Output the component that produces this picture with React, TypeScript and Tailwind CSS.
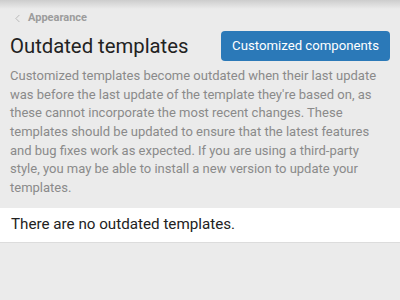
import { ChevronLeft } from "lucide-react";

// Page: outdated templates list (empty state)
export default function App() {
  return (
    <div
      className="relative w-[400px] h-[300px] overflow-hidden bg-[#ebebeb]"
      style={{ fontFamily: "Roboto, 'Noto Sans', sans-serif" }}
    >
      {/* shadow from the bar above */}
      <div className="absolute left-0 right-0 top-0 h-[9px] bg-gradient-to-b from-[#cdcdcd] to-[#ebebeb]/0" />

      <div className="pt-[11px]">
        <div className="flex items-center h-[14px] pl-[11px] text-[#a4a4a4]">
          <ChevronLeft size={13} strokeWidth={1.3} />
          <span className="ml-[4px] text-[11px] font-bold text-[#9c9c9c]">Appearance</span>
        </div>

        <div className="flex items-center justify-between pl-[10px] pr-[10px] mt-[6px]">
          <h1 className="text-[20.3px] leading-[30px] text-[#222]">Outdated templates</h1>
          <button className="h-[30px] w-[169px] rounded-[4px] bg-[#2b79b8] text-white text-[13.2px]">
            Customized components
          </button>
        </div>

        <p className="px-[10px] mt-[6px] text-[13px] leading-[18.67px] text-[#8a8a8a]">
          Customized templates become outdated when their last update was before the last update
          of the template they're based on, as these cannot incorporate the most recent changes.
          These templates should be updated to ensure that the latest features and bug fixes work
          as expected. If you are using a third-party style, you may be able to install a new
          version to update your templates.
        </p>

        <div className="mt-[10px] bg-white border-b border-[#dcdcdc] h-[35px] flex items-center px-[11px]">
          <span className="text-[15.2px] text-[#222]">There are no outdated templates.</span>
        </div>
      </div>
    </div>
  );
}
